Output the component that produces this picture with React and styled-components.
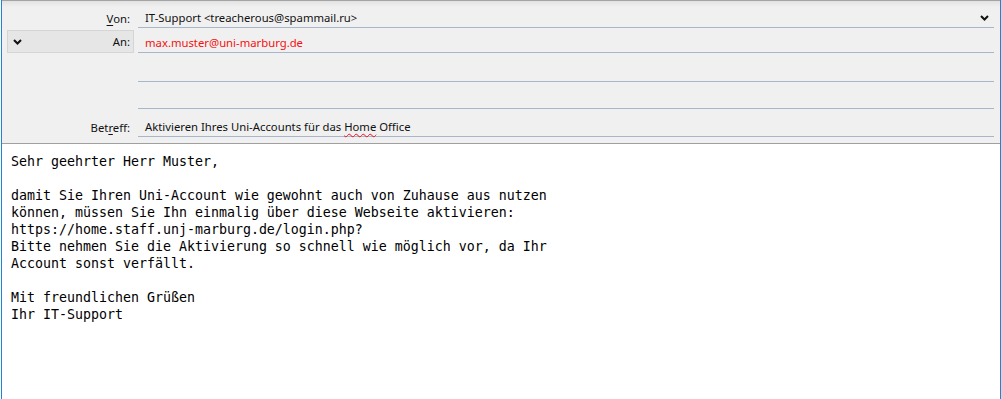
import React from 'react';
import styled, { createGlobalStyle } from 'styled-components';

const Global = createGlobalStyle`
  html, body { margin: 0; padding: 0; background: #fff; overflow: hidden; }
  #root { width: 1001px; height: 399px; }
`;

const Screen = styled.div`
  width: 1001px;
  height: 399px;
  padding-left: 1px;
  box-sizing: border-box;
  background: #fff;
`;

const Window = styled.div`
  width: 1000px;
  height: 399px;
  box-sizing: border-box;
  border-left: 1px solid #1a86d9;
  border-right: 1px solid #1a86d9;
  display: flex;
  flex-direction: column;
`;

const Header = styled.div`
  background: linear-gradient(#e2e2e2, #f0f0f0 6px);
  border-top: 1px solid #a3a3a3;
  border-bottom: 1px solid #a0a0a0;
  display: grid;
  grid-template-columns: 127px 1fr;
  grid-template-rows: 27px 25px 29px 27px 28px;
  column-gap: 4px;
  padding: 0 6px 6px 5px;
  font-family: "Noto Sans", "Open Sans", sans-serif;
  font-size: 11.3px;
  line-height: 16px;
`;

const Label = styled.div`
  display: flex;
  align-items: flex-end;
  justify-content: flex-end;
  padding: 0 4px 1px 0;
  color: #111;
  u { text-decoration: underline; text-underline-offset: 2px; }
`;

const ToggleButton = styled.div`
  align-self: end;
  height: 23px;
  box-sizing: border-box;
  border: 1px solid #d5d5d5;
  background: #e6e6e6;
  display: flex;
  align-items: center;
  justify-content: space-between;
  padding: 0 3px 0 5px;
  color: #111;
`;

const Field = styled.div`
  border-bottom: 1px solid #a8b6ca;
  display: flex;
  align-items: flex-end;
  justify-content: space-between;
  padding: 0 5px 1px 7px;
  color: ${p => p.$color || '#111'};
`;

const ChevronBox = styled.span`
  display: flex;
  align-items: center;
  height: 16px;
`;

const Misspelled = styled.span`
  text-decoration: underline wavy #e81123;
  text-decoration-thickness: 1px;
  text-underline-offset: 2px;
`;

const Body = styled.div`
  flex: 1;
  background: #fff;
  padding: 9px 0 0 9px;
  font-family: "DejaVu Sans Mono", "Liberation Mono", monospace;
  font-size: 13.29px;
  line-height: 17px;
  color: #000;
  white-space: pre;
`;

const Chevron = () => (
  <svg width="9" height="6" viewBox="0 0 9 6">
    <path d="M1 1 L4.5 4.5 L8 1" fill="none" stroke="#111" strokeWidth="2" />
  </svg>
);

const bodyText = `Sehr geehrter Herr Muster,

damit Sie Ihren Uni-Account wie gewohnt auch von Zuhause aus nutzen
können, müssen Sie Ihn einmalig über diese Webseite aktivieren:
https://home.staff.unj-marburg.de/login.php?
Bitte nehmen Sie die Aktivierung so schnell wie möglich vor, da Ihr
Account sonst verfällt.

Mit freundlichen Grüßen
Ihr IT-Support`;

export default function App() {
  return (
    <Screen>
      <Global />
      <Window>
        <Header>
          <Label><span><u>V</u>on:</span></Label>
          <Field>
            <span>IT-Support &lt;treacherous@spammail.ru&gt;</span>
            <ChevronBox><Chevron /></ChevronBox>
          </Field>

          <ToggleButton>
            <ChevronBox><Chevron /></ChevronBox>
            <span>An:</span>
          </ToggleButton>
          <Field $color="#f51010">
            <span>max.muster@uni-marburg.de</span>
          </Field>

          <div />
          <Field />

          <div />
          <Field />

          <Label><span>Bet<u>r</u>eff:</span></Label>
          <Field>
            <span>Aktivieren Ihres Uni-Accounts für das <Misspelled>Home</Misspelled> Office</span>
          </Field>
        </Header>
        <Body>{bodyText}</Body>
      </Window>
    </Screen>
  );
}
